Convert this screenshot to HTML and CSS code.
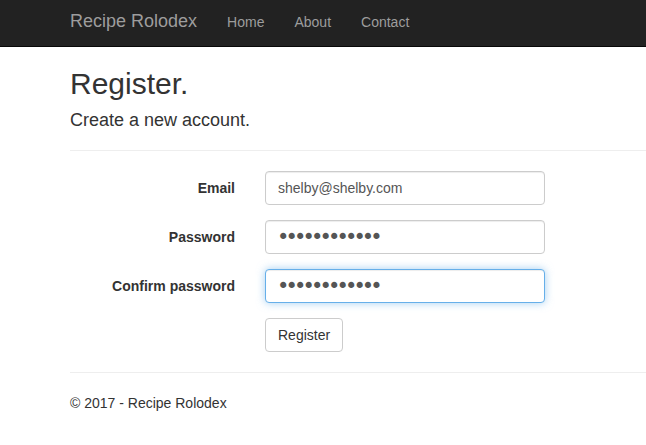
FILE: index.html
```html
<!DOCTYPE html>
<html lang="en">
<head>
<meta charset="utf-8">
<title>Register - Recipe Rolodex</title>
<link rel="stylesheet" href="styles.css">
</head>
<body>
<nav class="navbar">
  <a class="brand" href="#">Recipe Rolodex</a>
  <ul class="nav">
    <li><a href="#">Home</a></li>
    <li><a href="#">About</a></li>
    <li><a href="#">Contact</a></li>
  </ul>
</nav>
<main class="body-content">
  <h2 class="title">Register.</h2>
  <form class="form-horizontal">
    <h4 class="subtitle">Create a new account.</h4>
    <hr class="rule">
    <div class="form-group">
      <label class="control-label" for="Email">Email</label>
      <input class="form-control" type="text" id="Email" value="shelby@shelby.com">
    </div>
    <div class="form-group">
      <label class="control-label" for="Password">Password</label>
      <input class="form-control secret" type="password" id="Password" value="password1234">
    </div>
    <div class="form-group">
      <label class="control-label" for="ConfirmPassword">Confirm password</label>
      <input class="form-control secret focused" type="password" id="ConfirmPassword" value="password1234">
    </div>
    <div class="form-group">
      <span class="control-label"></span>
      <div><button type="button" class="btn">Register</button></div>
    </div>
  </form>
  <hr class="rule">
  <footer class="footer">
    <p>&copy; 2017 - Recipe Rolodex</p>
  </footer>
</main>
</body>
</html>
```
FILE: styles.css
```css
* { box-sizing: border-box; }
html, body { margin: 0; padding: 0; }
body {
  font-family: "Liberation Sans", Arial, Helvetica, sans-serif;
  font-size: 14px;
  line-height: 20px;
  color: #333;
  background: #fff;
  overflow: hidden;
}
.navbar {
  display: flex;
  align-items: flex-start;
  height: 47px;
  background: #222;
  border-bottom: 1px solid #080808;
  padding-left: 55px;
}
.brand {
  display: block;
  padding: 11px 15px 15px;
  font-size: 18px;
  line-height: 20px;
  color: #9d9d9d;
  text-decoration: none;
}
.nav {
  display: flex;
  list-style: none;
  margin: 0;
  padding: 0;
}
.nav a {
  display: block;
  padding: 12px 15px 14px;
  color: #9d9d9d;
  text-decoration: none;
  line-height: 20px;
}
.body-content {
  padding-left: 70px;
}
.title {
  font-size: 30px;
  font-weight: 500;
  line-height: 33px;
  margin: 20px 0 10px;
}
.subtitle {
  font-size: 18px;
  font-weight: 500;
  line-height: 20px;
  margin: 10px 0 0;
}
.rule {
  border: 0;
  border-top: 1px solid #eee;
  margin: 20px 0;
  height: 0;
}
.form-horizontal { margin: 0; }
.form-group {
  display: grid;
  grid-template-columns: 165px 280px;
  column-gap: 30px;
  margin-bottom: 15px;
}
.control-label {
  font-weight: bold;
  text-align: right;
  padding-top: 7px;
}
.form-control {
  display: block;
  width: 280px;
  height: 34px;
  padding: 6px 12px;
  font-family: inherit;
  font-size: 14px;
  line-height: 20px;
  color: #555;
  background: #fff;
  border: 1px solid #ccc;
  border-radius: 4px;
  box-shadow: inset 0 1px 1px rgba(0,0,0,.075);
  outline: none;
}
.form-control.secret {
  font-family: "DejaVu Sans", sans-serif;
  font-size: 21px;
  letter-spacing: -3.9px;
  padding: 0 11px;
  line-height: 32px;
}
.form-control.focused {
  border-color: #66afe9;
  box-shadow: inset 0 1px 1px rgba(0,0,0,.075), 0 0 8px rgba(102,175,233,.6);
}
.btn {
  display: inline-block;
  height: 34px;
  padding: 6px 12px;
  font-family: inherit;
  font-size: 14px;
  line-height: 20px;
  color: #333;
  background: #fff;
  border: 1px solid #ccc;
  border-radius: 4px;
  cursor: pointer;
}
.footer p { margin: 0 0 10px; }
```
